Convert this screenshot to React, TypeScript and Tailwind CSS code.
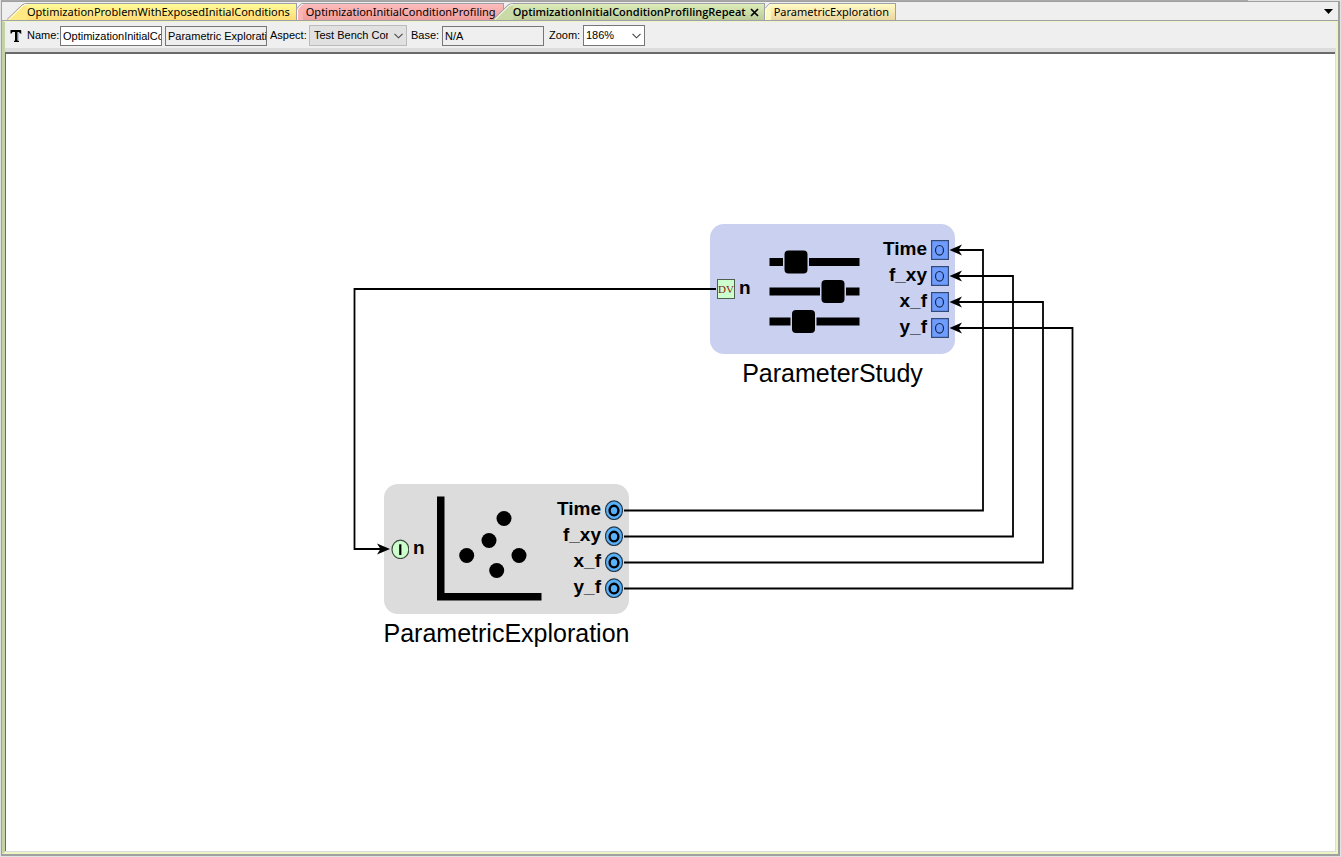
import React, { useState } from "react";

const SANS = "font-['Liberation_Sans',Arial,sans-serif]";

type TabShape = "slant" | "corner";

interface TabInfo {
  label: string;
  shape: TabShape;
  fill: string;
  slope: string;
  body: string;
}

const tabs: TabInfo[] = [
  {
    label: "OptimizationProblemWithExposedInitialConditions",
    shape: "slant",
    fill: "bg-linear-to-b from-[#fffb9a] to-[#ffdc74]",
    slope: "#ffe983",
    body: "pr-[6px]",
  },
  {
    label: "OptimizationInitialConditionProfiling",
    shape: "corner",
    fill: "bg-linear-to-b from-[#fdbcbc] to-[#f09c9c]",
    slope: "#fab4b4",
    body: "pl-[3px] pr-[7px]",
  },
  {
    label: "OptimizationInitialConditionProfilingRepeat",
    shape: "slant",
    fill: "bg-linear-to-b from-[#dcedba] to-[#bccd9a]",
    slope: "#c9daa7",
    body: "pr-[3px]",
  },
  {
    label: "ParametricExploration",
    shape: "corner",
    fill: "bg-linear-to-b from-[#fffcc4] to-[#ecd6a0]",
    slope: "#fdf8bf",
    body: "pl-[3px] pr-[6px]",
  },
];

function TabEdge({ shape, color }: { shape: TabShape; color: string }) {
  if (shape === "slant") {
    return (
      <svg className="h-[17px] w-5 shrink-0" viewBox="0 0 20 17" aria-hidden="true">
        <path d="M0 17 L15 2 Q17 0.5 20 0.5 V17 Z" fill={color} />
        <path d="M0 16.5 L15 2 Q17 0.5 20 0.5" fill="none" stroke="#a0a0a8" />
        <path d="M2 16.5 L16 2.8 Q18 1.5 20 1.5" fill="none" stroke="#fff" />
      </svg>
    );
  }
  return (
    <svg className="h-[17px] w-[6px] shrink-0" viewBox="0 0 6 17" aria-hidden="true">
      <path d="M0 17 V6 L5 0.5 H6 V17 Z" fill={color} />
      <path d="M0 5.5 L4.5 0.5 H6" fill="none" stroke="#a0a0a8" />
      <path d="M0.5 17 V6.5 L5 1.5 H6" fill="none" stroke="#fff" />
    </svg>
  );
}

function Tab({ tab, active, onSelect }: { tab: TabInfo; active: boolean; onSelect: () => void }) {
  const overlap = tab.shape === "slant" && tab !== tabs[0];
  return (
    <div className={`flex h-[17px] ${overlap ? "z-10 -ml-[11px]" : ""}`}>
      <TabEdge shape={tab.shape} color={tab.slope} />
      <div
        className={`flex items-center gap-[3px] border-t border-r border-[#a0a0a8] ${tab.fill} ${tab.body}`}
      >
        <button
          type="button"
          role="tab"
          aria-selected={active}
          onClick={onSelect}
          className={`text-[11px] leading-4 whitespace-nowrap text-black ${active ? "font-['Open_Sans',sans-serif] font-semibold" : ""}`}
        >
          {tab.label}
        </button>
        {active && (
          <button type="button" aria-label="Close tab" className="flex size-3 items-center justify-center">
            <svg className="size-[9px]" viewBox="0 0 9 9" aria-hidden="true">
              <path d="M1 1 L8 8 M8 1 L1 8" stroke="#000" strokeWidth="1.7" />
            </svg>
          </button>
        )}
      </div>
    </div>
  );
}

function Chevron({ className }: { className: string }) {
  return (
    <svg className={`pointer-events-none absolute top-2 h-[6px] w-[9px] ${className}`} viewBox="0 0 9 6" aria-hidden="true">
      <path d="M0.5 0.8 L4.5 4.8 L8.5 0.8" fill="none" stroke="#444" strokeWidth="1.1" />
    </svg>
  );
}

function Toolbar() {
  const field = "h-5 w-[102px] border border-[#767676] pl-[2px] text-[11px] leading-4 text-black outline-none";
  return (
    <div className={`flex h-[26px] items-center bg-[#efefef] pt-[1px] pl-[5px] text-[11px] whitespace-nowrap ${SANS}`}>
      <svg className="mr-[5px] h-3 w-3 shrink-0" viewBox="0 0 12 12" aria-hidden="true">
        <path d="M0.5 0 H11 V3.5 H10 L9 2 H7.5 V10.5 L9 11 V12 H4 V11 L5 10.5 V2 H2.5 L1.5 3.5 H0.5 Z" fill="#000" />
        <path d="M11.5 0.5 V4 M8.3 2.5 V11" stroke="#8fa8c8" strokeWidth="0.8" />
      </svg>
      <label htmlFor="name" className="w-[33px]">Name:</label>
      <input id="name" defaultValue="OptimizationInitialConditionProfilingRepeat" className={`${field} bg-white`} />
      <input
        aria-label="Kind"
        readOnly
        value="Parametric Exploration"
        className={`${field} ml-[3px] bg-[#efefef]`}
      />
      <label htmlFor="aspect" className="ml-[3px] w-[39px]">Aspect:</label>
      <div className="relative">
        <select
          id="aspect"
          className="block h-[21px] w-[98px] appearance-none overflow-hidden border border-[#bbb] bg-[#e1e1e1] pr-[18px] pl-1 text-[11px] text-black"
        >
          <option>Test Bench Configuration</option>
        </select>
        <Chevron className="right-1" />
      </div>
      <label htmlFor="base" className="ml-1 w-[31px]">Base:</label>
      <input id="base" readOnly value="N/A" className={`${field} bg-[#efefef]`} />
      <label htmlFor="zoom" className="ml-[5px] w-[34px]">Zoom:</label>
      <div className="relative">
        <select
          id="zoom"
          className="block h-[21px] w-[62px] appearance-none border border-[#767676] bg-white pl-[2px] text-[11px] text-black"
        >
          <option>186%</option>
        </select>
        <Chevron className="right-1" />
      </div>
    </div>
  );
}

function SlidersIcon() {
  return (
    <svg className="h-[106px] w-[106px]" viewBox="0 0 106 106" aria-hidden="true">
      <path
        d="M6.5 22 H20 V30 H6.5 Z M46 22 H96.5 V30 H46 Z M6.5 51.5 H57 V59.5 H6.5 Z M83 51.5 H96.5 V59.5 H83 Z M6.5 81.5 H27.5 V89.5 H6.5 Z M53.5 81.5 H96.5 V89.5 H53.5 Z"
        fill="#000"
      />
      <rect x="21.5" y="14.5" width="23" height="23" rx="4" />
      <rect x="58.5" y="44" width="23" height="23" rx="4" />
      <rect x="29" y="74" width="23" height="23" rx="4" />
    </svg>
  );
}

function ScatterIcon() {
  return (
    <svg className="h-[106px] w-[106px]" viewBox="0 0 106 106" aria-hidden="true">
      <path d="M0 0.5 H7.5 V97 H104.5 V104.5 H0 Z" />
      <circle cx="67" cy="22.5" r="7.5" />
      <circle cx="52" cy="44.5" r="7.5" />
      <circle cx="29.7" cy="59.5" r="7.5" />
      <circle cx="82" cy="59.5" r="7.5" />
      <circle cx="59.7" cy="74.5" r="7.5" />
    </svg>
  );
}

function SquarePort() {
  return (
    <svg className="h-5 w-[18px] shrink-0" viewBox="0 0 18 20" aria-hidden="true">
      <rect x="0.6" y="0.6" width="16.8" height="18.8" fill="#6f9dff" stroke="#344a78" strokeWidth="1.2" />
      <ellipse cx="8.5" cy="10.3" rx="4" ry="4.8" fill="none" stroke="#16264c" strokeWidth="1.2" />
    </svg>
  );
}

function RoundPort() {
  return (
    <svg className="h-5 w-[18px] shrink-0" viewBox="0 0 18 20" aria-hidden="true">
      <ellipse cx="9" cy="10.2" rx="8.5" ry="9.3" fill="#58b2fb" stroke="#24384a" strokeWidth="1.2" />
      <ellipse cx="9" cy="10.6" rx="4.4" ry="4.8" fill="none" stroke="#000" strokeWidth="2.4" />
    </svg>
  );
}

function InputPort() {
  return (
    <svg className="h-5 w-[18px] shrink-0" viewBox="0 0 18 20" aria-hidden="true">
      <ellipse cx="9.4" cy="10.4" rx="8.4" ry="9.2" fill="#ccffcc" stroke="#3c4c3c" strokeWidth="1.2" />
      <path d="M9.3 5.3 V16" stroke="#000" strokeWidth="2.2" />
    </svg>
  );
}

function DesignVariablePort() {
  return (
    <span className="flex h-5 w-[18px] shrink-0 items-center justify-center border border-[#506050] bg-[#ccffcc] font-['Liberation_Serif',serif] text-[11px] leading-none font-normal text-[#8c1c10]">
      DV
    </span>
  );
}

const outputs = ["Time", "f_xy", "x_f", "y_f"];

interface NodeProps {
  title: string;
  place: string;
  fill: string;
  input: React.ReactNode;
  icon: React.ReactNode;
  output: React.ReactNode;
}

function DiagramNode({ title, place, fill, input, icon, output }: NodeProps) {
  return (
    <section className={`absolute flex w-[245px] flex-col items-center ${place}`}>
      <div className={`flex h-[130px] w-full items-center rounded-[14px] pr-[6px] pl-[7px] text-[19px] leading-5 font-bold ${fill}`}>
        <div className="flex w-[46px] shrink-0 items-center gap-1">
          {input}
          <span className="pb-[2px]">n</span>
        </div>
        <div className="shrink-0">{icon}</div>
        <ul className="ml-auto">
          {outputs.map((name) => (
            <li key={name} className="flex h-[26px] items-center justify-end gap-1">
              <span className="pb-[2px]">{name}</span>
              {output}
            </li>
          ))}
        </ul>
      </div>
      <h2 className="mt-[3px] text-[25px] leading-8 whitespace-nowrap">{title}</h2>
    </section>
  );
}

const wires = [
  "M618 456.5 H977 V196 H950",
  "M618 482.5 H1007 V222 H950",
  "M618 508.5 H1037 V248 H950",
  "M618 534.5 H1066.5 V274 H950",
  "M710 235 H348.5 V495 H378",
];

function Canvas() {
  return (
    <main className={`relative min-h-[640px] grow overflow-hidden border-t-2 border-l border-[#6a6a6a] bg-white ${SANS}`}>
      <DiagramNode
        title="ParameterStudy"
        place="left-[704px] top-[170px]"
        fill="bg-[#c9d0f0]"
        input={<DesignVariablePort />}
        icon={<SlidersIcon />}
        output={<SquarePort />}
      />
      <DiagramNode
        title="ParametricExploration"
        place="left-[378px] top-[430px]"
        fill="bg-[#dcdcdc]"
        input={<InputPort />}
        icon={<ScatterIcon />}
        output={<RoundPort />}
      />
      <svg className="pointer-events-none absolute top-0 left-0 h-[640px] w-[1100px]" viewBox="0 0 1100 640" aria-hidden="true">
        {wires.map((d) => (
          <path key={d} d={d} fill="none" stroke="#000" strokeWidth="1.8" />
        ))}
        {[196, 222, 248, 274].map((y) => (
          <path key={y} d={`M943.5 ${y} L956 ${y - 5.5} L952.5 ${y} L956 ${y + 5.5} Z`} />
        ))}
        <path d="M384 495 L371 489.5 L374.5 495 L371 500.5 Z" />
      </svg>
    </main>
  );
}

export default function App() {
  const [selected, setSelected] = useState(2);
  return (
    <div className="flex min-h-screen flex-col bg-[#e2e2e2] px-[1px] pb-[1px] text-black">
      <div className="mr-[92px] h-[1px] bg-[#a8a8a8]" />
      <div className="flex grow flex-col border border-r-2 border-b-2 border-[#a0a0a0] bg-[#efefef]">
        <header className="flex h-[19px] items-end justify-between border-b border-[#a0a0a8] pr-[5px] pl-[5px] font-['Noto_Sans','Open_Sans',sans-serif]">
          <div role="tablist" className="flex items-end">
            {tabs.map((tab, i) => (
              <Tab key={tab.label} tab={tab} active={selected === i} onSelect={() => setSelected(i)} />
            ))}
          </div>
          <button type="button" aria-label="Show open documents" className="flex h-[18px] items-center">
            <svg className="h-[5px] w-[9px]" viewBox="0 0 9 5" aria-hidden="true">
              <path d="M0 0 H9 L4.5 5 Z" />
            </svg>
          </button>
        </header>
        <div className="flex grow flex-col border-t border-r-2 border-b-2 border-l-3 border-[#edf5c4] border-l-[#c3d3a3]">
          <Toolbar />
          <div className="h-1 bg-[#dcdcdc]" />
          <div className="flex grow flex-col border-r border-b border-[#dcdcdc]">
            <Canvas />
          </div>
        </div>
      </div>
    </div>
  );
}
